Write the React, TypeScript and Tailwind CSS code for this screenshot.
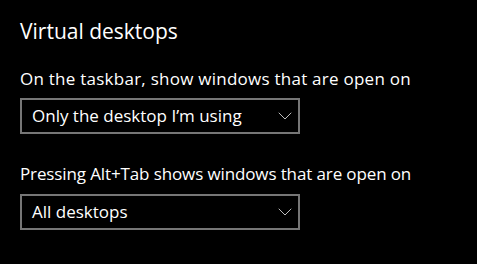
import { ChevronDown } from "lucide-react";

const font = { fontFamily: '"Open Sans", "Noto Sans", sans-serif' };

function Dropdown({ value }: { value: string }) {
  return (
    <div className="flex h-[36px] w-[280px] items-center justify-between border-2 border-[#767676] pl-[10px] pr-[1px]">
      <span className="text-[17px] leading-[22px] text-white">{value}</span>
      <ChevronDown className="h-[24px] w-[24px] text-[#bdbdbd]" strokeWidth={1} />
    </div>
  );
}

export default function App() {
  return (
    <div className="h-[264px] w-[477px] bg-black pl-[20px] pt-[17px] text-white" style={font}>
      <h1 className="text-[21px] leading-[28px]">Virtual desktops</h1>

      <p className="mt-[23px] text-[17px] leading-[22px] tracking-[0.25px]">
        On the taskbar, show windows that are open on
      </p>
      <div className="mt-[8px]">
        <Dropdown value="Only the desktop I’m using" />
      </div>

      <p className="mt-[29px] text-[17px] leading-[22px] tracking-[-0.12px]">
        Pressing Alt+Tab shows windows that are open on
      </p>
      <div className="mt-[9px]">
        <Dropdown value="All desktops" />
      </div>
    </div>
  );
}
